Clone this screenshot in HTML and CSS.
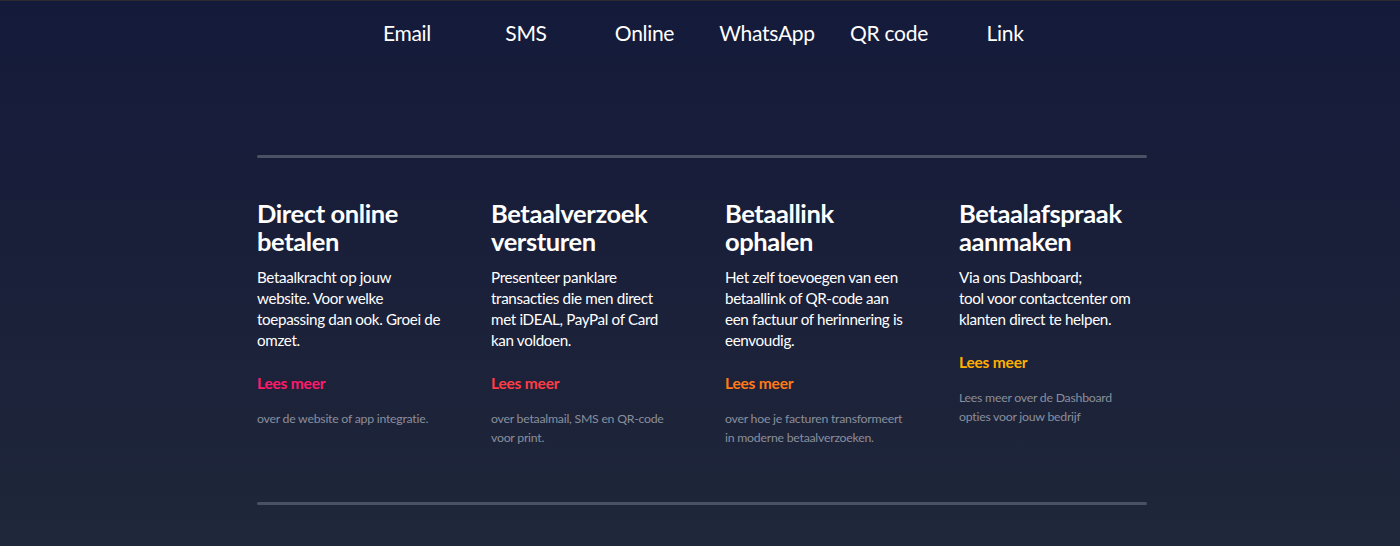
FILE: index.html
```html
<!DOCTYPE html>
<html lang="nl">
<head>
<meta charset="utf-8">
<title>Betaalmethoden</title>
<link rel="stylesheet" href="styles.css">
</head>
<body>
<nav class="channels">
  <a class="channel c1">Email</a>
  <a class="channel c2">SMS</a>
  <a class="channel c3">Online</a>
  <a class="channel c4">WhatsApp</a>
  <a class="channel c5">QR code</a>
  <a class="channel c6">Link</a>
</nav>
<main class="content">
  <div class="rule"></div>
  <section class="cards">
    <article class="card">
      <h2 class="card-title">Direct online betalen</h2>
      <p class="card-text">Betaalkracht op jouw website. Voor welke toepassing dan ook. Groei de omzet.</p>
      <a class="more more-pink">Lees meer</a>
      <p class="card-note">over de website of app integratie.</p>
    </article>
    <article class="card">
      <h2 class="card-title">Betaalverzoek versturen</h2>
      <p class="card-text">Presenteer panklare transacties die men direct met iDEAL, PayPal of Card kan voldoen.</p>
      <a class="more more-red">Lees meer</a>
      <p class="card-note">over betaalmail, SMS en QR-code voor print.</p>
    </article>
    <article class="card">
      <h2 class="card-title">Betaallink ophalen</h2>
      <p class="card-text">Het zelf toevoegen van een betaallink of QR-code aan een factuur of herinnering is eenvoudig.</p>
      <a class="more more-orange">Lees meer</a>
      <p class="card-note">over hoe je facturen transformeert in moderne betaalverzoeken.</p>
    </article>
    <article class="card">
      <h2 class="card-title">Betaalafspraak aanmaken</h2>
      <p class="card-text">Via ons Dashboard;<br>tool voor contactcenter om klanten direct te helpen.</p>
      <a class="more more-amber">Lees meer</a>
      <p class="card-note">Lees meer over de Dashboard opties voor jouw bedrijf</p>
    </article>
  </section>
  <div class="rule rule-bottom"></div>
</main>
</body>
</html>
```

FILE: styles.css
```css
html, body {
  margin: 0;
  padding: 0;
}

body {
  height: 545px;
  overflow: hidden;
  border-top: 1px solid #2c2c2e;
  background: linear-gradient(180deg, #141a3a 0%, #1a2039 50%, #1f273a 100%);
  font-family: "Lato", "Open Sans", sans-serif;
  color: #ffffff;
}

.channels {
  display: grid;
  grid-template-columns: 121px 117px 120px 125px 119px 113px;
  justify-content: center;
  padding: 18px 0 0 8px;
}

.channel {
  text-align: center;
  font-size: 21px;
  line-height: 28px;
  font-weight: 400;
  color: #ffffff;
  letter-spacing: -0.3px;
}

.content {
  width: 890px;
  margin-left: calc(50% - 443px);
  padding-top: 108px;
}

.rule {
  height: 3px;
  border-radius: 2px;
  background: #4b5165;
}

.rule-bottom {
  margin-top: 55px;
}

.cards {
  display: grid;
  grid-template-columns: repeat(4, 188px);
  column-gap: 46px;
  padding-top: 41px;
  align-items: start;
}

.card-title {
  margin: 0;
  font-size: 25.5px;
  line-height: 28px;
  font-weight: 700;
  letter-spacing: -0.4px;
}

.card-text {
  margin: 12px 0 0;
  font-size: 15.2px;
  line-height: 21px;
  letter-spacing: -0.35px;
}

.more {
  display: block;
  margin-top: 22px;
  font-size: 15.5px;
  line-height: 21px;
  font-weight: 700;
  letter-spacing: -0.2px;
}

.more-pink { color: #ff1a6c; }
.more-red { color: #ff3d46; }
.more-orange { color: #ff7a17; }
.more-amber { color: #ffb000; }

.card-note {
  max-width: 180px;
  margin: 15px 0 0;
  font-size: 12.3px;
  line-height: 19px;
  color: #8a8e9c;
  letter-spacing: -0.25px;
}
```
